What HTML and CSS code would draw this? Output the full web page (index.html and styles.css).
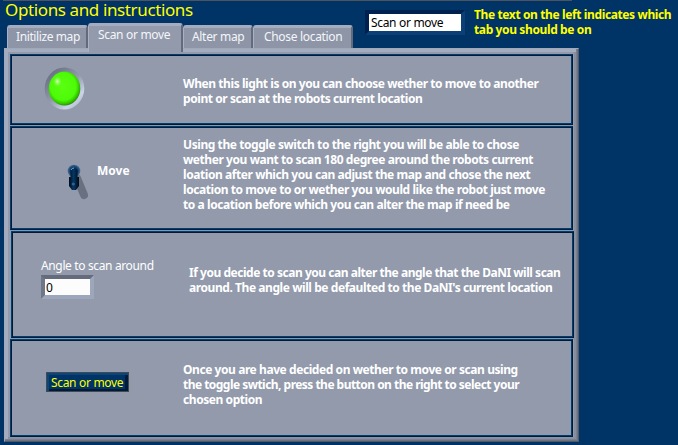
FILE: index.html
```html
<!DOCTYPE html>
<html lang="en">
<head>
<meta charset="utf-8">
<title>Options and instructions</title>
<link rel="stylesheet" href="styles.css">
</head>
<body>
<header class="header">
  <div class="nav">
    <h1 class="title">Options and instructions</h1>
    <div class="tabs">
      <div class="tab tab-init"><span>Initilize map</span></div>
      <div class="tab tab-scan active"><span>Scan or move</span></div>
      <div class="tab tab-alter"><span>Alter map</span></div>
      <div class="tab tab-chose"><span>Chose location</span></div>
    </div>
  </div>
  <div class="indicator">Scan or move</div>
  <p class="hint">The text on the left indicates which<br>tab you should be on</p>
</header>
<main class="panel">
  <section class="row row-light">
    <div class="control">
      <svg class="led" width="42" height="44" viewBox="0 0 42 44">
        <defs>
          <linearGradient id="ring" x1="0.15" y1="0.1" x2="0.85" y2="0.9"><stop offset="0" stop-color="#697083"/><stop offset=".5" stop-color="#929aac"/><stop offset=".85" stop-color="#cbd4e8"/><stop offset="1" stop-color="#b4bdd0"/></linearGradient>
          <radialGradient id="bulb" cx=".46" cy=".44" r=".58"><stop offset="0" stop-color="#5aff10"/><stop offset=".7" stop-color="#4dfb08"/><stop offset=".88" stop-color="#32c300"/><stop offset="1" stop-color="#247e0c"/></radialGradient>
          <radialGradient id="shine"><stop offset="0" stop-color="#ddffc8"/><stop offset="1" stop-color="#5aff10" stop-opacity="0"/></radialGradient>
        </defs>
        <ellipse cx="21.5" cy="21.5" rx="19.8" ry="21" fill="url(#ring)"/>
        <ellipse cx="21.5" cy="21.5" rx="15.8" ry="17" fill="url(#bulb)"/>
        <ellipse cx="14.5" cy="14.5" rx="5" ry="6" fill="url(#shine)"/>
      </svg>
    </div>
    <p class="text">When this light is on you can choose wether to move to another<br>point or scan at the robots current location</p>
  </section>
  <section class="row row-toggle">
    <div class="control">
      <svg class="toggle" width="30" height="40" viewBox="0 0 30 40">
        <defs>
          <linearGradient id="lever" x1="0" x2="1"><stop offset="0" stop-color="#000b1b"/><stop offset=".45" stop-color="#053765"/><stop offset="1" stop-color="#000916"/></linearGradient>
          <radialGradient id="base"><stop offset="0" stop-color="#012b54"/><stop offset=".65" stop-color="#0b4377"/><stop offset="1" stop-color="#526a8c"/></radialGradient>
        </defs>
        <path d="M13 14L20 31" stroke="#697181" stroke-width="8" stroke-linecap="round"/>
        <circle cx="10" cy="7" r="6.3" fill="url(#base)"/>
        <path d="M6.5 6Q10 2 13.5 6V13L15 13V22L12 26H8L5 22V13H6.5Z" fill="url(#lever)"/>
        <path d="M7 6Q8 4 10 4" stroke="#7fa0c0" fill="none"/>
        <circle cx="9.3" cy="20" r="1.6" fill="#2b6394"/>
      </svg>
      <span class="toggle-label">Move</span>
    </div>
    <p class="text">Using the toggle switch to the right you will be able to chose<br>wether you want to scan 180 degree around the robots current<br>loation after which you can adjust the map and chose the next<br>location to move to or wether you would like the robot just move<br>to a location before which you can alter the map if need be</p>
  </section>
  <section class="row row-angle">
    <div class="control">
      <label class="angle-label">Angle to scan around</label>
      <div class="angle-input">0</div>
    </div>
    <p class="text"><span class="tight">If you decide to scan you can alter the angle that the DaNI will scan</span><br>around. The angle will be defaulted to the DaNI's current location</p>
  </section>
  <section class="row row-button">
    <div class="control"><div class="button"><span>Scan or move</span></div></div>
    <p class="text">Once you are have decided on wether to move or scan using<br><span class="tighter">the toggle swtich, press the button on the right to select your</span><br>chosen option</p>
  </section>
</main>
</body>
</html>
```
FILE: styles.css
```css
* { box-sizing: border-box; }
body {
  margin: 0;
  width: 678px;
  height: 445px;
  overflow: hidden;
  background: #003366;
  font: 12px/15px "Noto Sans", "Open Sans", sans-serif;
  letter-spacing: -.32px;
  color: #fff;
  white-space: nowrap;
}
p, h1 { margin: 0; }
.header {
  display: flex;
  height: 48px;
  background: linear-gradient(#4e535c, #4e535c) 3px 0 / 569px 1px no-repeat;
}
.nav { flex: none; width: 365px; padding-left: 5px; }
.title { height: 23px; font-size: 17px; line-height: 20px; font-weight: 400; letter-spacing: -.38px; color: #ff0; }
.tabs { display: flex; align-items: flex-start; padding-left: 2px; }
.tab {
  height: 23px;
  margin-top: 2px;
  padding: 3px 0 0 8px;
  background: #8d95a7;
  border-top: 3px solid #a4adbf;
  border-left: 1px solid #a9b2c4;
  border-right: 2px solid #626a7b;
  border-radius: 3px 3px 0 0;
  line-height: 12px;
  color: #f4f6fa;
}
.tab-init { width: 81px; letter-spacing: -.4px; }
.tab-scan { width: 95px; padding-left: 9px; }
.tab-alter { width: 70px; }
.tab-chose { width: 100px; padding-left: 10px; }
.tab.active {
  position: relative;
  height: 29px;
  margin: 0 0 -4px;
  background: #929aac;
}
.indicator {
  flex: none;
  width: 100px;
  height: 25px;
  margin-top: 10px;
  border: 4px solid;
  border-color: #002050 #0b3f76 #0b3f76 #002050;
  background: #fff;
  color: #000;
  padding-left: 2px;
  line-height: 18px;
}
.hint { flex: none; margin: 7px 0 0 9px; font-weight: 700; letter-spacing: -.38px; color: #ff0; }
.panel {
  width: 575px;
  height: 394px;
  margin-left: 4px;
  padding: 5px 0 0 5px;
  background: #929aac;
  border: 1px solid;
  border-color: #a0a9bb #545962 #545962 #a0a9bb;
  box-shadow:
    inset -1px -1px #6b7282,
    inset -2px -2px #777f90,
    inset 3px 3px #a4adbf,
    inset -4px -4px #868ea0;
}
.row {
  display: flex;
  width: 563px;
  margin-bottom: 1px;
  border: 1px solid;
  border-color: #003d70 #001b38 #001b38 #003d70;
  box-shadow: inset 1px 1px #001b38, inset -1px -1px #003d70, 0 1px #8397af;
}
.control { width: 172px; flex: none; }
.text { font-weight: 700; letter-spacing: -.43px; }
.tight { letter-spacing: -.47px; }
.tighter { letter-spacing: -.53px; }
.row-light { height: 71px; }
.row-toggle { height: 104px; }
.row-angle { height: 107px; margin-left: 1px; }
.row-button { height: 98px; }
.led { display: block; margin: 12px 0 0 32px; }
.row-light .text { margin-top: 21px; }
.row-toggle .control { display: flex; }
.toggle { margin: 37px 0 0 53px; }
.toggle-label { margin: 36px 0 0 3px; font-weight: 700; letter-spacing: 0; }
.row-toggle .text { margin-top: 10px; }
.angle-label { display: block; margin: 26px 0 0 29px; line-height: 16px; letter-spacing: -.36px; }
.angle-input {
  width: 53px;
  height: 24px;
  margin: 1px 0 0 29px;
  border: 4px solid;
  border-color: #636b7d #9da7bb #9da7bb #6e7689;
  background: #fcfcfc;
  color: #000;
  padding-left: 1px;
  line-height: 17px;
}
.row-angle .control { width: 177px; }
.row-angle .text { margin-top: 33px; }
.button {
  width: 83px;
  height: 20px;
  margin: 32px 0 0 35px;
  padding-left: 4px;
  background: #003366;
  border: 1px solid #444951;
  box-shadow: inset 2px 2px #08467b, inset -3px -2px #001b3a;
  line-height: 19px;
  color: #ff0;
}
.row-button .text { margin-top: 22px; }
```
